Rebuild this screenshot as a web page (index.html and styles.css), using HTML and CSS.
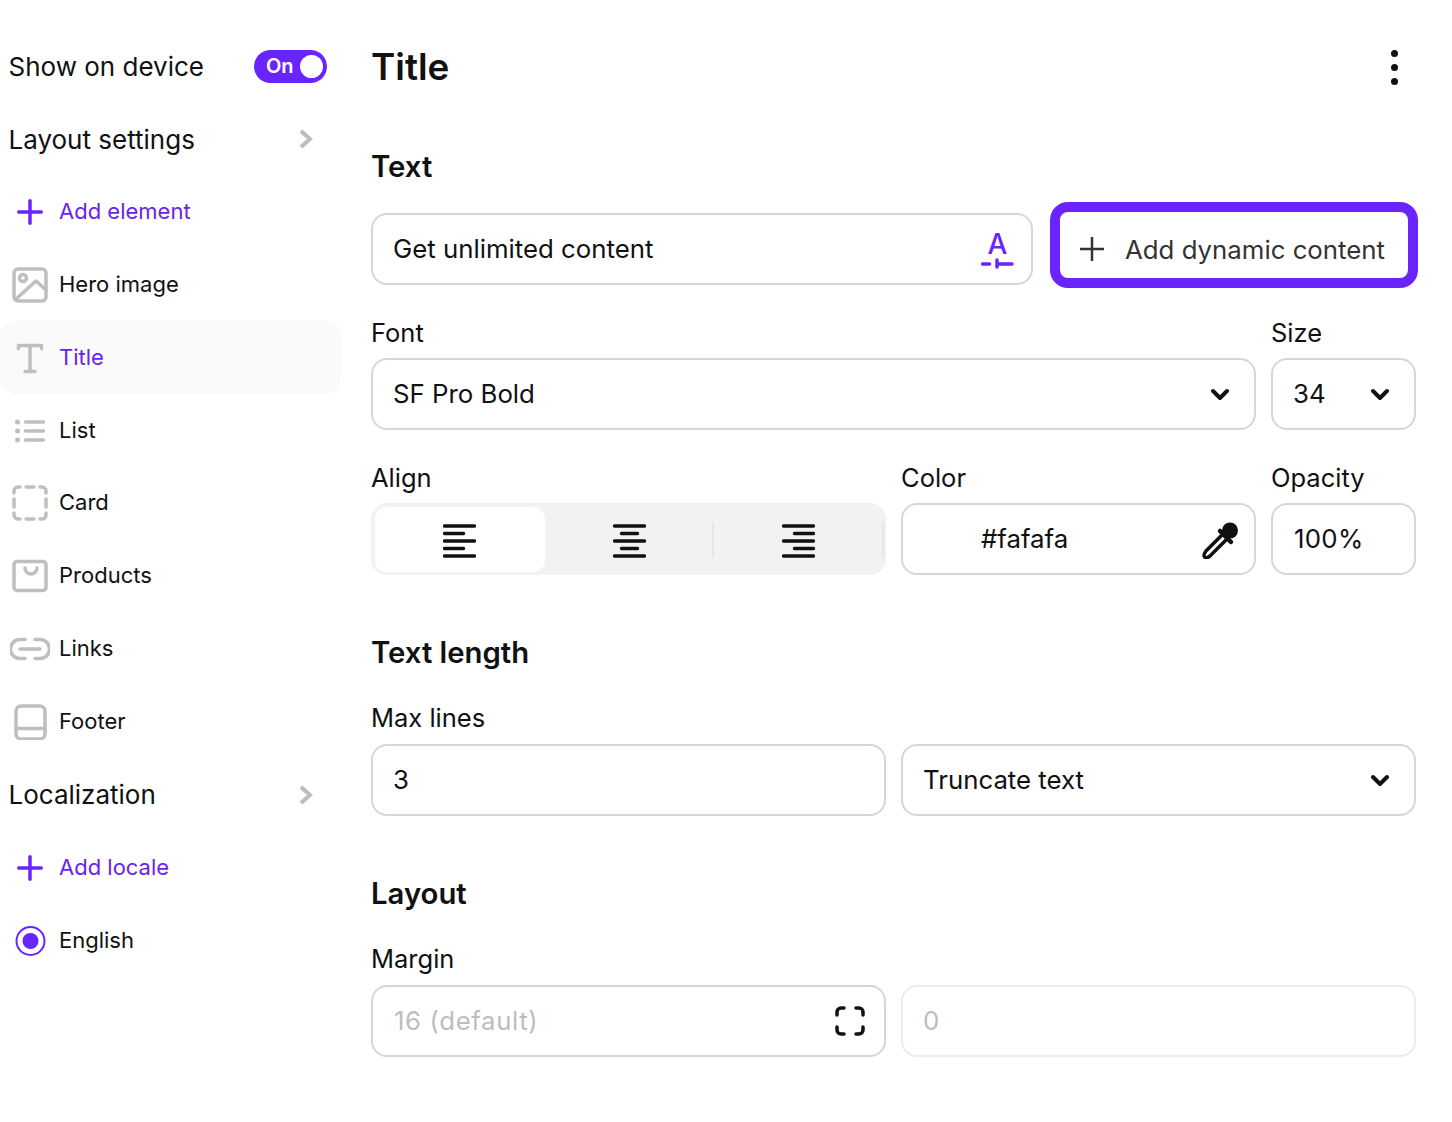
FILE: index.html
```html
<!DOCTYPE html>
<html lang="en">
<head>
    <meta charset="UTF-8">
    <meta name="viewport" content="width=device-width, initial-scale=1.0">
    <title>Title settings</title>
    <link rel="stylesheet" href="styles.css">
</head>
<body>

<div class="page">
    <aside class="sidebar">
        <div class="row row-head">
            <span>Show on device</span>
            <div class="toggle"><span>On</span><i class="knob"></i></div>
        </div>
        <div class="row row-head">
            <span>Layout settings</span>
            <svg class="chevron" width="16" height="20" viewBox="0 0 16 20"><path d="M3 2l9 8-9 8"/></svg>
        </div>
        <div class="row row-item accent">
            <svg class="icon" width="36" height="36" viewBox="0 0 36 36"><path class="stroke-accent" d="M18 6.750v22.500M6.750 18h22.500"/></svg>
            <span>Add element</span>
        </div>
        <div class="row row-item">
            <svg class="icon" width="36" height="36" viewBox="0 0 36 36"><rect class="stroke-grey" x="2" y="2" width="32" height="32" rx="4"/><circle class="stroke-grey" cx="11" cy="11" r="3.500"/><path class="stroke-grey" d="M4 32l20-18 10 9"/></svg>
            <span>Hero image</span>
        </div>
        <div class="row row-item accent active">
            <svg class="icon" width="36" height="36" viewBox="0 0 36 36"><path class="stroke-grey" d="M6.500 8.500v-3h23v3M18 5.500v26M13 31.500h10"/></svg>
            <span>Title</span>
        </div>
        <div class="row row-item">
            <svg class="icon" width="36" height="36" viewBox="0 0 36 36"><path class="stroke-grey" d="M13.500 9h18M13.500 18h18M13.500 27h18"/><circle class="fill-grey" cx="5.500" cy="9" r="2.500"/><circle class="fill-grey" cx="5.500" cy="18" r="2.500"/><circle class="fill-grey" cx="5.500" cy="27" r="2.500"/></svg>
            <span>List</span>
        </div>
        <div class="row row-item">
            <svg class="icon" width="36" height="36" viewBox="0 0 36 36"><path class="stroke-grey" d="M2 8V6a4 4 0 0 1 4-4h2M14 2h8M28 2h2a4 4 0 0 1 4 4v2M34 14v8M34 28v2a4 4 0 0 1-4 4h-2M22 34h-8M8 34H6a4 4 0 0 1-4-4v-2M2 22v-8"/></svg>
            <span>Card</span>
        </div>
        <div class="row row-item">
            <svg class="icon" width="36" height="36" viewBox="0 0 36 36"><rect class="stroke-grey" x="2" y="3.500" width="32" height="29" rx="3"/><path class="stroke-grey" d="M13 10a6 6 0 0 0 12 0"/></svg>
            <span>Products</span>
        </div>
        <div class="row row-item">
            <svg class="icon icon-wide" width="40" height="36" viewBox="0 0 40 36"><path class="stroke-grey" d="M15 8.500h-5a9.500 9.500 0 0 0 0 19h5M25 8.500h5a9.500 9.500 0 0 1 0 19h-5M10 18h20"/></svg>
            <span>Links</span>
        </div>
        <div class="row row-item">
            <svg class="icon" width="36" height="36" viewBox="0 0 36 36"><rect class="stroke-grey" x="4" y="2" width="29" height="33" rx="5"/><path class="stroke-grey" d="M4 24.500h29"/></svg>
            <span>Footer</span>
        </div>
        <div class="row row-head">
            <span>Localization</span>
            <svg class="chevron" width="16" height="20" viewBox="0 0 16 20"><path d="M3 2l9 8-9 8"/></svg>
        </div>
        <div class="row row-item accent">
            <svg class="icon" width="36" height="36" viewBox="0 0 36 36"><path class="stroke-accent" d="M18 6.750v22.500M6.750 18h22.500"/></svg>
            <span>Add locale</span>
        </div>
        <div class="row row-item">
            <svg class="icon" width="36" height="36" viewBox="0 0 36 36"><circle cx="18.500" cy="18" r="14" fill="none" stroke="#6a24ff" stroke-width="2"/><circle cx="18.500" cy="18" r="8" fill="#6a24ff"/></svg>
            <span>English</span>
        </div>
    </aside>

    <main class="main">
        <div class="main-header">
            <h1>Title</h1>
            <div class="dots"><i></i><i></i><i></i></div>
        </div>

        <h2 class="section-first">Text</h2>
        <div class="text-row">
            <div class="field field-text">
                <span>Get unlimited content</span>
                <svg class="text-icon" width="36" height="40" viewBox="0 0 36 40"><text class="ai-letter" x="16.500" y="25" text-anchor="middle">A</text><path d="M1.500 35h7M16 35h15M16 31v7" fill="none" stroke="#6a24ff" stroke-width="3.500" stroke-linecap="round"/></svg>
            </div>
            <div class="dynamic-btn">
                <svg width="26" height="26" viewBox="0 0 26 26"><path d="M13 1v24M1 13h24" fill="none" stroke="#333" stroke-width="2.500"/></svg>
                <span>Add dynamic content</span>
            </div>
        </div>

        <div class="form-grid">
            <div class="cell span-2">
                <label>Font</label>
                <div class="field">
                    <span>SF Pro Bold</span>
                    <svg class="caret" width="18" height="14" viewBox="0 0 18 14"><path d="M2 3l7 7 7-7"/></svg>
                </div>
            </div>
            <div class="cell">
                <label>Size</label>
                <div class="field">
                    <span>34</span>
                    <svg class="caret" width="18" height="14" viewBox="0 0 18 14"><path d="M2 3l7 7 7-7"/></svg>
                </div>
            </div>
            <div class="cell">
                <label>Align</label>
                <div class="segments">
                    <div class="seg seg-on">
                        <svg width="33" height="36" viewBox="0 0 33 36"><path class="align-lines" d="M1.500 4h30M1.500 11.500h19M1.500 19h30M1.500 26.500h19M1.500 34h30"/></svg>
                    </div>
                    <div class="seg seg-sep">
                        <svg width="33" height="36" viewBox="0 0 33 36"><path class="align-lines" d="M1.500 4h30M8.500 11.500h16M1.500 19h30M8.500 26.500h16M1.500 34h30"/></svg>
                    </div>
                    <div class="seg seg-sep">
                        <svg width="33" height="36" viewBox="0 0 33 36"><path class="align-lines" d="M1.500 4h30M12.500 11.500h19M1.500 19h30M12.500 26.500h19M1.500 34h30"/></svg>
                    </div>
                </div>
            </div>
            <div class="cell">
                <label>Color</label>
                <div class="field field-color">
                    <span>#fafafa</span>
                    <svg width="40" height="40" viewBox="0 0 40 40"><path d="M23 15L6 32q-3 4-1.500 6T10 37l17-17" fill="#fff" stroke="#111" stroke-width="3.500"/><path d="M20 12l11 11" stroke="#111" stroke-width="4.500" stroke-linecap="round"/><circle cx="30" cy="11.500" r="8" fill="#111"/></svg>
                </div>
            </div>
            <div class="cell">
                <label>Opacity</label>
                <div class="field field-pct"><span>100%</span></div>
            </div>
        </div>

        <h2>Text length</h2>
        <div class="form-grid form-lower">
            <div class="cell">
                <label>Max lines</label>
                <div class="field"><span>3</span></div>
            </div>
            <div class="cell span-2">
                <label>&nbsp;</label>
                <div class="field">
                    <span>Truncate text</span>
                    <svg class="caret" width="18" height="14" viewBox="0 0 18 14"><path d="M2 3l7 7 7-7"/></svg>
                </div>
            </div>
        </div>

        <h2>Layout</h2>
        <div class="form-grid form-lower">
            <div class="cell">
                <label>Margin</label>
                <div class="field field-muted">
                    <span>16 (default)</span>
                    <svg class="focus-icon" width="30" height="30" viewBox="0 0 30 30"><path d="M2 9V6a4 4 0 0 1 4-4h3M21 2h3a4 4 0 0 1 4 4v3M28 21v3a4 4 0 0 1-4 4h-3M9 28H6a4 4 0 0 1-4-4v-3" fill="none" stroke="#111" stroke-width="3.500" stroke-linecap="round"/></svg>
                </div>
            </div>
            <div class="cell span-2">
                <label>&nbsp;</label>
                <div class="field field-muted field-off"><span>0</span></div>
            </div>
        </div>
    </main>
</div>

</body>
</html>
```

FILE: styles.css
```css
body {
    margin: 0;
    font-family: Inter, "Liberation Sans", sans-serif;
    background-color: #fff;
    color: #111;
}
.page {
    display: flex;
    gap: 30px;
    padding-top: 30px;
    height: 1092px;
    overflow: hidden;
}

/* sidebar */
.sidebar {
    width: 341px;
    flex-shrink: 0;
}
.row {
    display: flex;
    align-items: center;
    height: 72.85px;
    box-sizing: border-box;
}
.row-head {
    justify-content: space-between;
    padding: 0 14px 0 8.5px;
    font-size: 26px;
}
.row-item {
    gap: 11px;
    padding-left: 12px;
    font-size: 22px;
    font-weight: 430;
}
.row-item span {
    margin-bottom: 2px;
}
.accent {
    color: #6a24e8;
}
.active {
    background-color: #fafafa;
    border-radius: 16px;
}
.toggle {
    display: flex;
    align-items: center;
    justify-content: space-between;
    width: 73px;
    height: 33px;
    box-sizing: border-box;
    padding: 0 4px 0 12px;
    background-color: #6a24ff;
    border-radius: 17px;
    color: white;
    font-size: 20px;
    font-weight: 600;
}
.knob {
    width: 23px;
    height: 23px;
    background: white;
    border-radius: 50%;
}
.chevron {
    margin-right: 13px;
}
.chevron path {
    fill: none;
    stroke: #bdbdbd;
    stroke-width: 4;
}
.icon {
    flex-shrink: 0;
}
.icon-wide {
    margin: 0 -2px;
}
.stroke-grey {
    fill: none;
    stroke: #bfbfbf;
    stroke-width: 3.5;
    stroke-linecap: round;
    stroke-linejoin: round;
}
.fill-grey {
    fill: #bfbfbf;
}
.stroke-accent {
    fill: none;
    stroke: #6a24ff;
    stroke-width: 3.5;
    stroke-linecap: round;
}

/* main panel */
.main {
    width: 1045px;
    flex-shrink: 0;
}
.main-header {
    display: flex;
    align-items: center;
    justify-content: space-between;
    height: 74px;
}
h1 {
    margin: 0 0 2px;
    font-size: 36.8px;
    font-weight: 600;
}
.dots {
    display: flex;
    flex-direction: column;
    gap: 7px;
    margin-right: 18px;
}
.dots i {
    width: 7px;
    height: 7px;
    background: #111;
    border-radius: 50%;
}
h2 {
    margin: 61px 0 33px;
    height: 34px;
    line-height: 34px;
    font-size: 29.3px;
    font-weight: 600;
}
.section-first {
    margin: 46px 0 29px;
}
.text-row {
    display: flex;
    height: 72px;
    align-items: flex-start;
    margin-bottom: 33px;
}
.field {
    display: flex;
    align-items: center;
    justify-content: space-between;
    height: 72px;
    box-sizing: border-box;
    padding: 0 16px 0 20px;
    background: white;
    border: 2px solid #d6d6d6;
    border-radius: 16px;
    font-size: 25.8px;
    font-weight: 430;
}
.field > span {
    margin-bottom: 2px;
}
.field-text {
    width: 662px;
    flex-shrink: 0;
    padding-right: 14px;
}
.text-icon {
    overflow: visible;
}
.dynamic-btn {
    display: flex;
    flex-shrink: 0;
    align-items: center;
    gap: 20px;
    width: 368px;
    height: 86px;
    box-sizing: border-box;
    margin: -11px 0 0 17px;
    padding: 8px 0 0 19px;
    border: 10px solid #6a24ff;
    border-radius: 18px;
    color: #333;
    font-size: 25.8px;
    font-weight: 430;
    white-space: nowrap;
}
.form-grid {
    display: grid;
    grid-template-columns: 514.5px 354.5px 145px;
    column-gap: 15.5px;
    row-gap: 33px;
}
.cell {
    display: flex;
    flex-direction: column;
}
.span-2 {
    grid-column: span 2;
}
.cell label {
    height: 30px;
    line-height: 30px;
    margin-bottom: 10px;
    font-size: 25.5px;
}
.form-lower label {
    margin-bottom: 11px;
}
.caret {
    margin: 2px 9px 0 0;
}
.caret path {
    fill: none;
    stroke: #111;
    stroke-width: 4;
    stroke-linecap: round;
    stroke-linejoin: round;
}
.segments {
    display: grid;
    grid-template-columns: repeat(3, 1fr);
    height: 72px;
    box-sizing: border-box;
    padding: 4px 2px 3px 4px;
    background: #f2f2f2;
    border-radius: 16px;
}
.seg {
    display: flex;
    align-items: center;
    justify-content: center;
}
.seg-on {
    background: white;
    border-radius: 12px;
}
.seg-sep {
    background: linear-gradient(#e6e6e6, #e6e6e6) right center / 2px 36px no-repeat;
}
.align-lines {
    fill: none;
    stroke: #111;
    stroke-width: 3.5;
    stroke-linecap: round;
}
.field-color {
    padding-left: 78px;
    padding-right: 14px;
}
.field-pct {
    padding-left: 21px;
    letter-spacing: 0.3px;
}
.field-muted {
    padding-left: 21px;
    color: #bdbdbd;
    font-weight: 400;
    letter-spacing: 0.6px;
}
.field-off {
    padding-left: 20px;
    border-color: #ececec;
}
.focus-icon {
    margin-right: 3px;
}
.ai-letter {
    font-size: 28px;
    font-weight: 500;
    fill: #6a24ff;
}
```
